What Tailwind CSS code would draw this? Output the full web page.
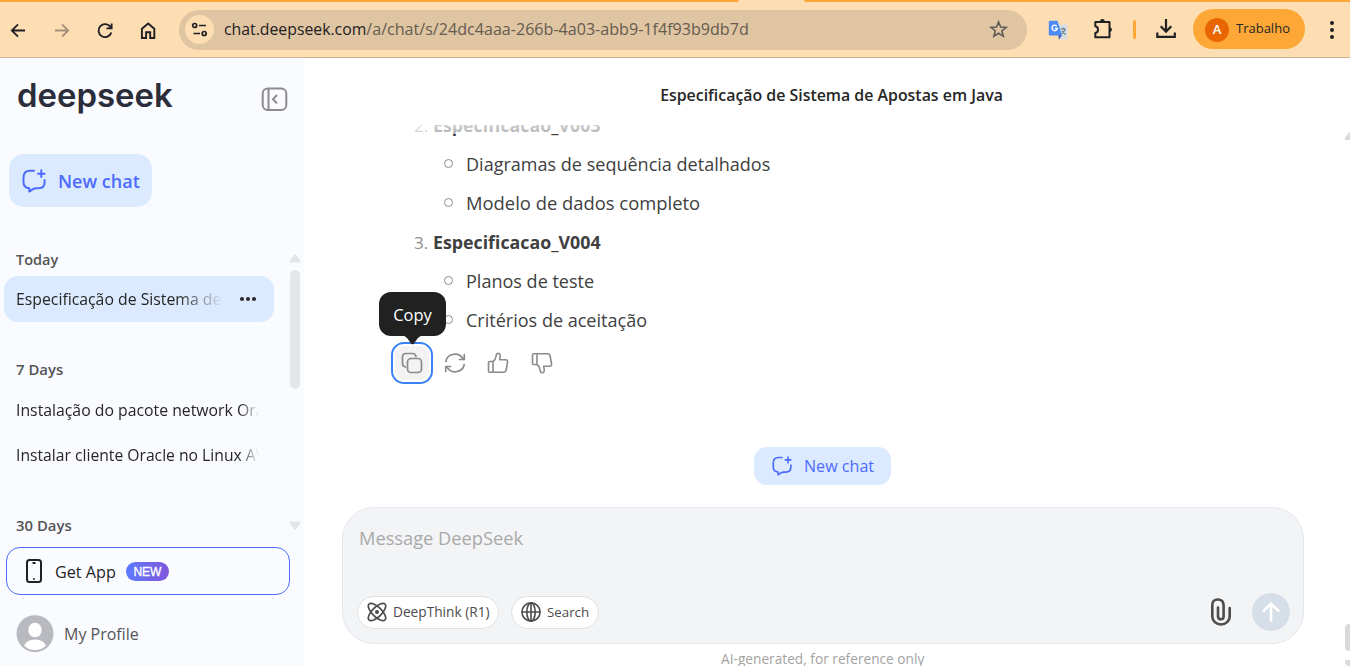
<!DOCTYPE html>
<html lang="pt">
<head>
<meta charset="utf-8">
<title>DeepSeek</title>
<script src="https://cdn.jsdelivr.net/npm/@tailwindcss/browser@4"></script>
</head>
<body class="flex h-[666px] w-[1350px] flex-col overflow-hidden bg-white font-['Open_Sans',sans-serif] text-[#262626]">
<svg class="hidden">
  <symbol id="newchat" viewBox="0 0 24 24" fill="none" stroke="currentColor" stroke-linecap="round" stroke-linejoin="round">
    <path d="M12 1.800H8Q1.500 1.800 1.500 8.500V13Q1.500 19 7.300 19.300V22.600L11.200 20Q12.500 19.300 14 19.300H16.500Q22.600 19.300 22.600 13.500V11"/>
    <path d="M19.300 1.300V8M16 4.650H22.600"/>
  </symbol>
  <symbol id="thumb" viewBox="0 0 22 22" fill="none" stroke="currentColor" stroke-width="1.600" stroke-linejoin="round" stroke-linecap="round">
    <path d="M1.500 10.500Q1.500 9.500 2.500 9.500H6V20.300H2.500Q1.500 20.300 1.500 19.300ZM6 9.500Q8.500 8 9 4.500Q9.200 1.200 11.200 1.200Q13.600 1.500 13.200 4.500L12.700 7.700H18.500Q21 7.900 20.500 10.500L19 18.500Q18.500 20.300 16.700 20.300H6"/>
  </symbol>
</svg>

<header class="flex h-[58px] shrink-0 flex-col border-b border-[#c8b49a] bg-[#fddeb3]">
  <div class="flex h-0.5 justify-between">
    <div class="w-[739px] rounded-br bg-[#fda836]"></div>
    <div class="w-[546px] rounded-bl bg-[#fda836]"></div>
  </div>
  <nav class="flex h-[55px] items-center">
    <svg class="ml-[9px] h-5 w-5" viewBox="0 0 20 20" fill="none" stroke="#1f2023" stroke-width="1.800"><path d="M16 10.500H3M9 4.300L2.800 10.500L9 16.700"/></svg>
    <svg class="ml-[23px] h-5 w-5" viewBox="0 0 20 20" fill="none" stroke="#a18f78" stroke-width="1.800"><path d="M3 10.500H16M10 4.300L16.200 10.500L10 16.700"/></svg>
    <svg class="ml-[23px] h-5 w-5" viewBox="0 0 20 20" fill="none" stroke="#1f2023" stroke-width="1.900"><path d="M16.300 12.500A6.500 6.500 0 1 1 15.500 7L16.500 8.200M16.600 3.500V8.400H11.500"/></svg>
    <svg class="ml-[23px] h-5 w-5" viewBox="0 0 20 20" fill="none" stroke="#1f2023" stroke-width="1.900"><path d="M3.900 8.700L10.200 3.600L16.300 8.700V18H12.200V12.200H8.100V18H3.900Z"/></svg>
    <div class="ml-[21px] flex h-10 w-[848px] items-center rounded-full bg-[#dfc5a2] pr-[18px]">
      <div class="ml-[6px] flex size-[29px] items-center justify-center rounded-full bg-[#fddeb3]">
        <svg class="h-[18px] w-[18px]" viewBox="0 0 18 18" fill="none" stroke="#1f2023" stroke-width="1.700"><circle cx="3.700" cy="4.500" r="2"/><path d="M8 4.500H15M2.500 12.500H9"/><circle cx="13.200" cy="12.500" r="2"/></svg>
      </div>
      <div class="ml-[10px] grow text-[16.100px] whitespace-nowrap text-[#655b50]"><span class="text-[15.800px] text-[#1f2023]">chat.deepseek.com</span>/a/chat/s/24dc4aaa-266b-4a03-abb9-1f4f93b9db7d</div>
      <svg class="h-5 w-5" viewBox="0 0 20 20" fill="none" stroke="#5f5b57" stroke-width="1.600"><path d="M9.600 2L11.600 7L17.200 7.400L12.900 11L14.300 16.300L9.600 13.300L4.900 16.300L6.300 11L2 7.400L7.600 7Z"/></svg>
    </div>
    <svg class="ml-[21px] h-5 w-5" viewBox="0 0 20 20"><path d="M8 4.500H18.500Q19.500 4.500 19.500 5.500V18.500Q19.500 19.500 18.500 19.500H12Z" fill="#d9dde3"/><path d="M10.500 15H14L10.800 19.700Z" fill="#3949ab"/><path d="M1.700 .800H9.500L14 15.500H1.700Q.800 15.500 .800 14.500V1.700Q.800 .800 1.700 .800Z" fill="#4c8bf5"/><path d="M12.500 9H18M15.200 7.500V9M17 9Q16.500 12 13.500 14M14 11L17.500 14.500" stroke="#607d8b" stroke-width="1.200" fill="none"/><path d="M8.700 6.200A2.700 2.700 0 1 0 9.300 8.500H6.800" stroke="#fff" stroke-width="1.400" fill="none"/></svg>
    <svg class="-mt-0.5 ml-[24px] h-[22px] w-[22px]" viewBox="0 0 22 22" fill="none" stroke="#1f2023" stroke-width="2" stroke-linejoin="round"><path d="M3.300 4H17.500V19.300H3.300V15Q6 14.500 6 11.700Q6 8.700 3.300 8.300Z"/><path d="M8 3.500A2.400 2.400 0 0 1 12.800 3.500ZM18 9.300A2.400 2.400 0 0 1 18 14Z" fill="#1f2023" stroke="none"/></svg>
    <div class="ml-[19px] h-[19px] w-[3px] rounded bg-[#fda836]"></div>
    <svg class="-mt-px ml-[19px] h-[22px] w-[22px]" viewBox="0 0 22 22" fill="none" stroke="#1f2023" stroke-width="2.200"><path d="M11 1V13M5.700 8.300L11 13.600L16.300 8.300M2.300 14.500V18.800H19.800V14.500"/></svg>
    <div class="-mt-px ml-4 flex h-10 w-28 items-center rounded-full bg-[#fda836]">
      <div class="mt-px ml-3 flex size-6 items-center justify-center rounded-full bg-[#e96500] text-[13px] font-semibold text-white">A</div>
      <div class="ml-[7px] text-[13px]">Trabalho</div>
    </div>
    <div class="ml-[25px] flex flex-col gap-[3px]"><i class="size-[4px] rounded-full bg-[#1f2023]"></i><i class="size-[4px] rounded-full bg-[#1f2023]"></i><i class="size-[4px] rounded-full bg-[#1f2023]"></i></div>
  </nav>
</header>

<div class="flex min-h-0 grow">
  <aside class="flex w-[304px] shrink-0 flex-col bg-[#f9fbff]">
    <div class="flex h-[78px] items-center justify-between pr-4 pl-[17px]">
      <div class="-mt-[3px] font-['Inter',sans-serif] text-[32.900px] leading-none font-semibold text-[#2b2d3a]">deepseek</div>
      <svg class="mt-[3px] h-[26px] w-[27px]" viewBox="0 0 27 26" fill="none" stroke="#8c8c8c" stroke-width="2"><rect x="1.700" y="2.500" width="23.600" height="21.500" rx="5"/><path d="M7.500 2.500V24M16 9L12 13.200L16 17.400"/></svg>
    </div>
    <button class="mt-[18px] ml-[9px] flex h-[53px] w-[143px] shrink-0 items-center rounded-[15px] bg-[#dbeafe] pl-[13px] text-[#4d6bfe]">
      <svg class="h-6 w-6 stroke-2"><use href="#newchat"/></svg>
      <span class="ml-3 pt-0.5 text-[18px] font-semibold whitespace-nowrap">New chat</span>
    </button>
    <div class="flex min-h-0 grow">
      <div class="w-[289px] shrink-0 pl-4 text-[15.800px] whitespace-nowrap">
        <div class="mt-[39px] flex h-[28px] items-center text-[14.500px] font-semibold text-[#555]"><span class="-mt-px">Today</span></div>
        <div class="mt-[2px] -ml-3 flex h-[46px] w-[270px] items-center rounded-[14px] bg-[#dbeafe] pl-3">
          <div class="w-[207px] overflow-hidden pt-0.5 mask-r-from-78%">Especificação de Sistema de</div>
          <div class="ml-[17px] flex gap-[2px]"><i class="size-[4px] rounded-full bg-[#262626]"></i><i class="size-[4px] rounded-full bg-[#262626]"></i><i class="size-[4px] rounded-full bg-[#262626]"></i></div>
        </div>
        <div class="mt-[34px] flex h-7 items-center text-[14.900px] font-semibold text-[#555]"><span class="-mt-0.5">7 Days</span></div>
        <div class="mt-[3px] flex h-[46px] w-[243px] items-center overflow-hidden pt-0.5 mask-r-from-92%">Instalação do pacote network Oracle</div>
        <div class="-mt-px flex h-[46px] w-[243px] items-center overflow-hidden pt-0.5 text-[15.700px] mask-r-from-92%">Instalar cliente Oracle no Linux AWS</div>
        <div class="mt-[33px] flex h-7 items-center text-[14.900px] font-semibold text-[#555]">30 Days</div>
      </div>
      <div class="flex h-[276px] w-3 flex-col items-center pt-[46px]">
        <svg class="h-[10px] w-3 shrink-0" viewBox="0 0 12 10" fill="#e3e5e9"><path d="M5 1.500Q6 .500 7 1.500L11.500 8Q11.500 9.500 10.500 9.500H1.500Q.500 9.500 .500 8Z"/></svg>
        <div class="mt-[7px] h-[119px] w-[10px] shrink-0 rounded-full bg-[#e4e6ea]"></div>
      </div>
    </div>
    <div class="relative flex h-[119px] shrink-0 flex-col pl-1.5">
      <svg class="absolute -top-[26px] left-[289px] h-[10px] w-3" viewBox="0 0 12 10" fill="#e3e5e9"><path d="M5 8.500Q6 9.500 7 8.500L11.500 2Q11.500 .500 10.500 .500H1.500Q.500 .500 .500 2Z"/></svg>
      <div class="flex h-12 w-[284px] items-center rounded-[14px] border border-[#4d6bfe] pl-[18px]">
        <svg class="h-[26px] w-[18px]" viewBox="0 0 18 26" fill="none" stroke="#1f2023" stroke-width="2"><rect x="2" y="2" width="14" height="22" rx="2.500"/><path d="M7.500 5H10.500M8.300 21H9.700" stroke-width="1.800"/></svg>
        <span class="ml-[12px] pt-0.5 text-[16.200px]">Get App</span>
        <span class="ml-[10px] flex h-[19px] w-[43px] items-center justify-center rounded-full bg-linear-to-r from-[#5b79fe] to-[#7e57dc] pt-px font-['Liberation_Sans',sans-serif] text-xs text-white [-webkit-text-stroke:0.300px_white]">NEW</span>
      </div>
      <div class="mt-5 ml-[10px] flex items-center">
        <svg class="h-[38px] w-[38px]" viewBox="0 0 38 38"><circle cx="19" cy="18.700" r="18.500" fill="#b9babf"/><ellipse cx="19" cy="15" rx="6.700" ry="7.300" fill="#fff"/><path d="M8 30.500Q11 24.500 19 24.500T30 30.500Q25.500 35 19 35T8 30.500Z" fill="#fff"/></svg>
        <span class="ml-[10px] text-[16px] text-[#555]">My Profile</span>
      </div>
    </div>
  </aside>

  <main class="relative flex grow flex-col">
    <h1 class="flex h-[67px] shrink-0 items-center justify-center pt-[9px] pl-[9px] text-[15.900px] font-semibold">Especificação de Sistema de Apostas em Java</h1>
    <div class="relative h-[322px] shrink-0 overflow-hidden text-[18.050px] text-[#404040]">
      <ol class="-mt-[19px] ml-[109px] [&_b]:text-[17.800px] [&_b]:font-bold">
        <li class="flex h-[39px] items-center"><span class="w-5 pl-px text-[17px] text-[#8b8b8b]">2.</span><b>Especificacao_V003</b></li>
        <li class="flex h-[39px] items-center pl-[31px]"><i class="mr-[13px] mb-[2px] size-[9px] rounded-full border border-[#8b8b8b]"></i>Diagramas de sequência detalhados</li>
        <li class="flex h-[39px] items-center pl-[31px] text-[18.400px]"><i class="mr-[13px] mb-[2px] size-[9px] rounded-full border border-[#8b8b8b]"></i><span class="-mt-px">Modelo de dados completo</span></li>
        <li class="flex h-[39px] items-center"><span class="w-5 pl-px text-[17px] text-[#8b8b8b]">3.</span><b>Especificacao_V004</b></li>
        <li class="flex h-[39px] items-center pl-[31px]"><i class="mr-[13px] mb-[2px] size-[9px] rounded-full border border-[#8b8b8b]"></i>Planos de teste</li>
        <li class="flex h-[39px] items-center pl-[31px]"><i class="mr-[13px] mb-[2px] size-[9px] rounded-full border border-[#8b8b8b]"></i>Critérios de aceitação</li>
      </ol>
      <div class="absolute inset-x-0 top-0 h-[9px] bg-linear-to-b from-white/75 to-white/60"></div>
      <div class="mt-[2px] ml-[87px] flex h-[42px] items-center text-[#8b8b8b]">
        <button class="flex h-[42px] w-[42px] items-center justify-center rounded-[13px] border-2 border-[#3b82f6] bg-white p-0.5">
          <span class="flex h-full w-full items-center justify-center rounded-[9px] bg-[#f3f3f3]"><svg class="h-[22px] w-[22px]" viewBox="0 0 22 22" fill="none" stroke="currentColor" stroke-width="1.700"><rect x="6.500" y="6.500" width="14" height="14" rx="3.500"/><path d="M4.500 15Q1.500 14.500 1.500 11.500V5Q1.500 1.500 5 1.500H11.500Q14.500 1.500 15 4.500" stroke-linecap="round"/></svg></span>
        </button>
        <svg class="ml-[11px] h-[22px] w-[22px]" viewBox="0 0 22 22" fill="none" stroke="currentColor" stroke-width="1.700" stroke-linecap="round" stroke-linejoin="round"><path d="M1.800 9.500A9.200 8.800 0 0 1 19.300 7.500M20.200 12.500A9.200 8.800 0 0 1 2.700 14.500M20.300 2.500V7.500H15.500M1.700 19.500V14.500H6.500"/></svg>
        <svg class="ml-[21px] h-[22px] w-[22px]"><use href="#thumb"/></svg>
        <svg class="ml-[22px] h-[22px] w-[22px] -scale-y-100"><use href="#thumb"/></svg>
      </div>
      <div class="absolute top-[167px] left-[75px] flex h-[44px] w-[67px] items-center justify-center rounded-[12px] bg-[#212121] pt-0.5 text-[16.500px] text-white">Copy
        <svg class="absolute top-[43px] left-[23px] h-[11px] w-[21px]" viewBox="0 0 21 11" fill="#212121"><path d="M0 0H21Q17.500 1 15.500 3.500L12 8.500Q10.500 10.200 9 8.500L5.500 3.500Q3.500 1 0 0Z"/></svg>
      </div>
    </div>
    <button class="ml-[450px] flex h-[38px] w-[137px] shrink-0 items-center rounded-[13px] bg-[#dbeafe] pl-[18px] text-[#4d6bfe]">
      <svg class="h-5 w-5 stroke-2" viewBox="0 0 20 20"><use href="#newchat" width="20" height="20"/></svg>
      <span class="ml-[12px] text-[16.100px] whitespace-nowrap">New chat</span>
    </button>
    <section class="mt-[22px] ml-[38px] flex h-[137px] w-[962px] shrink-0 flex-col justify-between rounded-[32px] border border-[#e5e7ee] bg-[#f3f4f6] pt-4 pr-[13px] pb-3 pl-3.5">
      <div class="pl-[2px] text-[18.250px] text-[#a9a9a9]">Message DeepSeek</div>
      <div class="flex items-center">
        <button class="flex h-[33px] w-[142px] items-center rounded-full border border-[#dfe0e2] bg-white pl-[9px] text-[13.700px] text-[#4c4c4c]">
          <svg class="h-5 w-5 shrink-0" viewBox="0 0 20 20" fill="none" stroke="#4c4c4c" stroke-width="1.700"><ellipse cx="10" cy="10" rx="11.300" ry="4.800" transform="rotate(45 10 10)"/><ellipse cx="10" cy="10" rx="11.300" ry="4.800" transform="rotate(-45 10 10)"/><circle cx="10" cy="10" r="2" fill="#4c4c4c" stroke="none"/></svg>
          <span class="ml-[6px] whitespace-nowrap">DeepThink (R1)</span>
        </button>
        <button class="ml-3 flex h-[33px] w-[88px] items-center rounded-full border border-[#dfe0e2] bg-white pl-[9px] text-[13.300px] text-[#4c4c4c]">
          <svg class="h-5 w-5 shrink-0" viewBox="0 0 20 20" fill="none" stroke="#4c4c4c" stroke-width="1.600"><circle cx="10" cy="10" r="9.100"/><ellipse cx="10" cy="10" rx="4.200" ry="9.100"/><path d="M1 10H19M10 1V19"/></svg>
          <span class="ml-[6px] pt-px">Search</span>
        </button>
        <svg class="ml-auto h-7 w-[22px]" viewBox="0 0 22 28" fill="none" stroke="#4c4c4c" stroke-width="2.600" stroke-linecap="round"><path d="M19.700 10V18.500A8.700 8 0 0 1 2.300 18.500V7Q2.300 1.500 7.800 1.500T13.600 7V18.500Q13.600 21.300 11 21.300T8 18.500V9.500"/></svg>
        <div class="ml-5 flex size-[38px] items-center justify-center rounded-full bg-[#d6dee8]"><svg class="h-5 w-[18px]" viewBox="0 0 18 20" fill="none" stroke="#fff" stroke-width="2.600" stroke-linecap="round" stroke-linejoin="round"><path d="M9 18.500V2M1.700 8.800L9 1.600L16.300 8.800"/></svg></div>
      </div>
    </section>
    <div class="mt-[6px] h-[16px] overflow-hidden pl-[417px] text-[13.700px] leading-[18px] whitespace-nowrap text-[#a3a3a3]">AI-generated, for reference only</div>
    <svg class="absolute top-[73px] right-0 h-[10px] w-[6px]" viewBox="0 0 6 10" fill="#d9d9d9"><path d="M6 .500L.500 7Q.500 9 2 9H6Z"/></svg>
    <div class="absolute right-0 bottom-[15px] h-[27px] w-[5px] rounded-l-[4px] bg-[#d9d9d9]"></div>
    <div class="absolute right-0 bottom-0 h-[6px] w-[5px] rounded-tl-[2px] rounded-bl-[5px] bg-[#d9d9d9]"></div>
  </main>
</div>
</body>
</html>
